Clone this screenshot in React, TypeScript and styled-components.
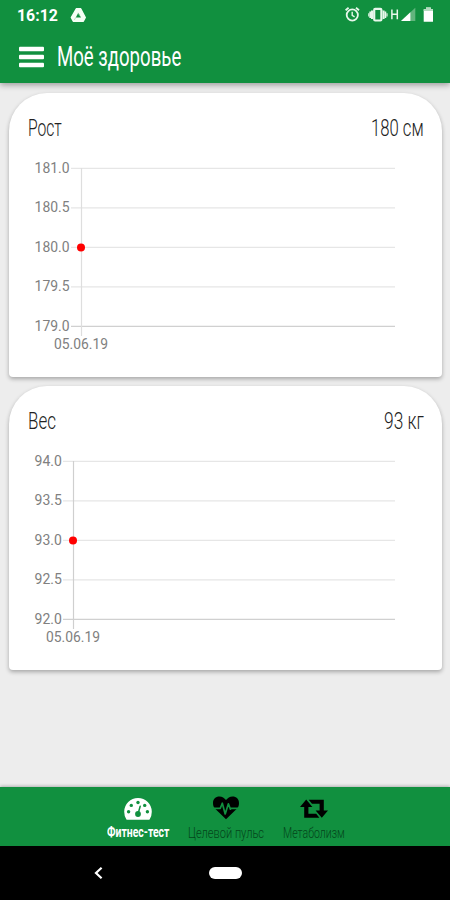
import React, { useLayoutEffect, useRef, useState } from "react";
import styled, { createGlobalStyle } from "styled-components";

const GREEN = "#11903f";

const GlobalStyle = createGlobalStyle`
  * { box-sizing: border-box; }
  body { margin: 0; background: #ededed; font-family: Roboto, "Open Sans", sans-serif; }
`;

const Screen = styled.div`
  width: 450px;
  height: 900px;
  display: flex;
  flex-direction: column;
  background: #ededed;
  overflow: hidden;
`;

const Header = styled.header`
  height: 83px;
  flex: none;
  display: flex;
  flex-direction: column;
  background: ${GREEN};
  box-shadow: 0 2px 6px rgba(0, 0, 0, 0.35);
  color: #fff;
`;

const StatusBar = styled.div`
  height: 30px;
  display: flex;
  align-items: center;
  justify-content: space-between;
  padding: 0 15px 0 17px;
`;

const StatusGroup = styled.div`
  display: flex;
  align-items: center;
`;

const AppBar = styled.div`
  height: 53px;
  display: flex;
  align-items: center;
  padding: 0 0 0 19px;
  gap: 13px;
`;

const CardList = styled.main`
  flex: 1;
  display: flex;
  flex-direction: column;
  gap: 9px;
  padding: 9.5px 8.5px 0 9px;
`;

const Card = styled.section`
  height: 284px;
  background: #fff;
  border-radius: 38px 38px 4px 4px;
  box-shadow: 0 2px 4px rgba(0, 0, 0, 0.3);
  display: flex;
  flex-direction: column;
`;

const CardHead = styled.div`
  height: 60px;
  flex: none;
  display: flex;
  justify-content: space-between;
  padding: 20px 18px 0 19px;
`;

const ChartSvg = styled.svg`
  display: block;
  width: 432px;
  height: 215px;
  flex: none;
  font: 400 14px Roboto, sans-serif;
`;

const BottomTabs = styled.nav`
  height: 59px;
  flex: none;
  display: flex;
  justify-content: center;
  gap: 19px;
  padding: 8px 0 0 2px;
  background: ${GREEN};
  box-shadow: 0 -1px 3px rgba(0, 0, 0, 0.25);
`;

const Tab = styled.div<{ $active?: boolean }>`
  display: flex;
  flex-direction: column;
  align-items: center;
  gap: 1px;
  color: ${(p) => (p.$active ? "#fff" : "#04451b")};
`;

const SystemNav = styled.footer`
  height: 54px;
  flex: none;
  display: flex;
  align-items: center;
  background: #000;
  padding-left: 93px;
  gap: 105px;
`;

const HomePill = styled.div`
  width: 33px;
  height: 12px;
  border-radius: 6px;
  background: #fff;
`;

const Clip = styled.span<{ $w: number; $h: number }>`
  display: block;
  width: ${(p) => p.$w}px;
  height: ${(p) => p.$h}px;
`;

const Condensed = styled.span<{ $size: number; $weight: number; $h: number }>`
  display: inline-block;
  white-space: nowrap;
  transform-origin: 0 50%;
  font-size: ${(p) => p.$size}px;
  font-weight: ${(p) => p.$weight};
  line-height: ${(p) => p.$h}px;
`;

type FitProps = { width: number; height: number; size: number; weight?: number; children: string };

/* Squeezes a line of text horizontally to the given width. */
function FitText({ width, height, size, weight = 300, children }: FitProps) {
  const ref = useRef<HTMLSpanElement>(null);
  const [scale, setScale] = useState(1);
  useLayoutEffect(() => {
    if (ref.current) setScale(width / ref.current.offsetWidth);
  }, [width, children]);
  return (
    <Clip $w={width} $h={height}>
      <Condensed ref={ref} $size={size} $weight={weight} $h={height} style={{ transform: `scaleX(${scale})` }}>
        {children}
      </Condensed>
    </Clip>
  );
}

const Dark = styled.div`
  color: #222;
`;

type ChartProps = { labels: string[]; axisX: number; strongAxis?: boolean };

function Chart({ labels, axisX, strongAxis }: ChartProps) {
  const top = 15;
  const step = 39.5;
  const bottom = top + step * 4;
  return (
    <ChartSvg viewBox="0 0 432 215">
      {labels.map((label, i) => {
        const y = top + step * i + 0.4;
        return (
          <g key={label}>
            <line x1={axisX - 10} x2={386} y1={y} y2={y} stroke={i === 4 ? "#d0d0d0" : "#e6e6e6"} strokeWidth={i === 4 ? 1.4 : 1.2} />
            <text x={25.6} y={y + 4.3} fill="#808080" textLength={label.length === 5 ? 35 : 27.3} lengthAdjust="spacingAndGlyphs">
              {label}
            </text>
          </g>
        );
      })}
      <line x1={axisX + 0.5} x2={axisX + 0.5} y1={top} y2={bottom + 10} stroke={strongAxis ? "#cfcfcf" : "#dedede"} strokeWidth={1.2} />
      <circle cx={axisX} cy={94.4} r={4} fill="#f00" />
      <text x={axisX - 27} y={bottom + 22.8} fill="#808080" textLength={54} lengthAdjust="spacingAndGlyphs">
        05.06.19
      </text>
    </ChartSvg>
  );
}

const MenuIcon = () => (
  <svg width="25" height="23" viewBox="0 0 25 23" fill="#fff">
    <rect x="0" y="1.8" width="25" height="4.4" rx="1" />
    <rect x="0" y="9.8" width="25" height="4.4" rx="1" />
    <rect x="0" y="17.8" width="25" height="4.4" rx="1" />
  </svg>
);

const DriveIcon = () => (
  <svg width="17" height="17" viewBox="0 0 17 17">
    <path d="M6.3 1.8 H10.7 L15.3 10.5 L13.3 14.2 H3.3 L1.3 10.5 Z" fill="#f5fff5" stroke="#f5fff5" strokeWidth="1.4" strokeLinejoin="round" />
    <path d="M8.3 5.8 L11 10.4 H5.8 Z" fill={GREEN} />
    <path d="M8 5.8 L9.8 8.8 M6 10.2 L4.3 13" stroke="#a5d3b0" strokeWidth=".7" />
  </svg>
);

const StatusIcons = () => (
  <svg width="91" height="18" viewBox="345 6 91 18" fill="none" stroke="#e8f7eb">
    <circle cx="353.3" cy="15" r="5.6" strokeWidth="1.8" />
    <path d="M353.2 11.7V15.3L355.6 16.8" strokeWidth="1.4" />
    <path d="M346.6 10.2L349.6 7.7M357 7.7L360 10.2" strokeWidth="1.8" />
    <rect x="375.2" y="8.9" width="7.2" height="11.6" rx="1" strokeWidth="2.2" />
    <path d="M373 10.5V19M384.6 10.5V19" strokeWidth="2" />
    <path d="M371.2 11.6V18M386.4 11.6V18" strokeWidth="1.7" />
    <path d="M369.8 13.2V16.5M388 13.2V16.5" strokeWidth="1.2" />
    <path d="M392.9 9.4V19.2M398.3 9.4V19.2M393 14.2H398.3" strokeWidth="1.5" />
    <path d="M402 21L416.3 7.8V21Z" fill="#61b57c" stroke="none" />
    <path d="M402 21L411.4 12.3V21Z" fill="#fff" stroke="none" />
    <path d="M424.7 9.2H427V7.6H431.8V9.2H434V21.7H424.7Z" fill="#fff" stroke="none" />
    <path d="M424.7 9.2H427V7.6H431.8V9.2H434V11H424.7Z" fill="#b5dcc0" stroke="none" />
  </svg>
);

const GaugeIcon = () => (
  <svg width="28" height="26" viewBox="0 0 28 26">
    <path d="M14 3A13.8 13.8 0 0 0 .2 16.8Q.2 21 2.3 24.3Q2.6 24.8 3.3 24.8H24.7Q25.4 24.8 25.7 24.3Q27.8 21 27.8 16.8A13.8 13.8 0 0 0 14 3Z" fill="#fff" />
    <g fill={GREEN}>
      <circle cx="4.6" cy="16.8" r="1.7" />
      <circle cx="7.3" cy="10.4" r="1.7" />
      <circle cx="14" cy="7.5" r="1.7" />
      <circle cx="20.7" cy="10.4" r="1.7" />
      <circle cx="23.4" cy="16.8" r="1.7" />
      <circle cx="14" cy="19" r="2.9" />
    </g>
    <path d="M14.3 18L16.2 11.2" stroke={GREEN} strokeWidth="1.5" strokeLinecap="round" />
  </svg>
);

const HeartIcon = () => (
  <svg width="28" height="26" viewBox="0 0 28 26">
    <path d="M14 24.3L3.4 14C1.8 12.5 1 10.7 1 8.2C1 4 3.6 1.6 7.5 1.6C10.2 1.6 12.4 3.4 14 5C15.6 3.4 17.8 1.6 20.5 1.6C24.4 1.6 27 4 27 8.2C27 10.7 26.2 12.5 24.6 14Z" fill="#000" />
    <path d="M1.5 13.3H8.3L10.3 8.2L13.2 19L16.4 8.8L18.4 14.2L19 13.3H26.5" fill="none" stroke={GREEN} strokeWidth="1.7" strokeLinejoin="round" />
  </svg>
);

const RepeatIcon = () => (
  <svg width="28" height="26" viewBox="0 0 28 26" fill="#000">
    <path d="M6.2 4.5L12.4 12H8.4V18.7H16.2L19.4 22.8H4.2V12H0Z" />
    <path d="M21.8 22.8L15.6 15.4H19.6V8.8H12L8.7 4.8H23.8V15.4H28Z" />
  </svg>
);

export default function App() {
  return (
    <Screen>
      <GlobalStyle />
      <Header>
        <StatusBar>
          <StatusGroup>
            <FitText width={41} height={20} size={17} weight={700}>16:12</FitText>
            <Clip $w={12} $h={1} />
            <DriveIcon />
          </StatusGroup>
          <StatusIcons />
        </StatusBar>
        <AppBar>
          <MenuIcon />
          <FitText width={124} height={53} size={28.5} weight={400}>Моё здоровье</FitText>
        </AppBar>
      </Header>
      <CardList>
        <Card>
          <CardHead>
            <Dark><FitText width={34} height={32} size={23}>Рост</FitText></Dark>
            <Dark><FitText width={53} height={32} size={23}>180 см</FitText></Dark>
          </CardHead>
          <Chart labels={["181.0", "180.5", "180.0", "179.5", "179.0"]} axisX={72} />
        </Card>
        <Card>
          <CardHead>
            <Dark><FitText width={28} height={32} size={23}>Вес</FitText></Dark>
            <Dark><FitText width={40} height={32} size={23}>93 кг</FitText></Dark>
          </CardHead>
          <Chart labels={["94.0", "93.5", "93.0", "92.5", "92.0"]} axisX={64} strongAxis />
        </Card>
      </CardList>
      <BottomTabs>
        <Tab $active>
          <GaugeIcon />
          <FitText width={62} height={22} size={14.5} weight={700}>Фитнес-тест</FitText>
        </Tab>
        <Tab>
          <HeartIcon />
          <FitText width={76} height={22} size={15}>Целевой пульс</FitText>
        </Tab>
        <Tab>
          <RepeatIcon />
          <FitText width={62} height={22} size={15}>Метаболизм</FitText>
        </Tab>
      </BottomTabs>
      <SystemNav>
        <svg width="11" height="14" viewBox="0 0 11 14">
          <path d="M8.6 1.8L3 7L8.6 12.2" fill="none" stroke="#fff" strokeWidth="2.2" />
        </svg>
        <HomePill />
      </SystemNav>
    </Screen>
  );
}
